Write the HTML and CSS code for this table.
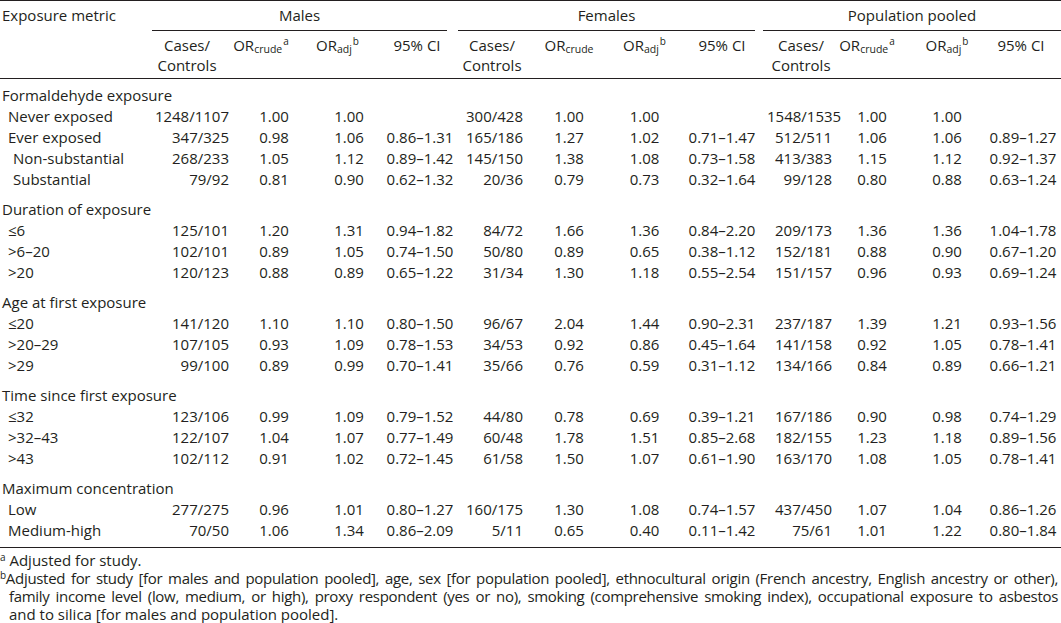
FILE: index.html
```html
<!DOCTYPE html>
<html lang="en">
<head>
<meta charset="utf-8">
<title>Formaldehyde exposure and lung cancer</title>
<link rel="stylesheet" href="styles.css">
</head>
<body>
<div class="page">
<table class="or-table">
<colgroup>
<col class="c-lbl"><col class="c-mcase"><col class="c-mcr"><col class="c-madj"><col class="c-mci">
<col class="c-fcase"><col class="c-fcr"><col class="c-fadj"><col class="c-fci">
<col class="c-pcase"><col class="c-pcr"><col class="c-padj"><col class="c-pci">
</colgroup>
<thead>
<tr class="h1">
<th class="h-lbl">Exposure metric</th>
<th colspan="4" class="h-grp"><div class="grp grp-m">Males</div></th>
<th colspan="4" class="h-grp"><div class="grp grp-f">Females</div></th>
<th colspan="4" class="h-grp"><div class="grp grp-p">Population pooled</div></th>
</tr>
<tr class="h2">
<th></th>
<th class="hc hc-mcase">Cases/<br>Controls</th>
<th class="hc hc-mcr">OR<sub class="sb">crude</sub><sup class="sp">a</sup></th>
<th class="hc hc-madj">OR<sub class="sb">adj</sub><sup class="sp">b</sup></th>
<th class="hc hc-mci">95% CI</th>
<th class="hc">Cases/<br>Controls</th>
<th class="hc">OR<sub class="sb">crude</sub></th>
<th class="hc">OR<sub class="sb">adj</sub><sup class="sp">b</sup></th>
<th class="hc">95% CI</th>
<th class="hc">Cases/<br>Controls</th>
<th class="hc hc-pcr">OR<sub class="sb">crude</sub><sup class="sp">a</sup></th>
<th class="hc">OR<sub class="sb">adj</sub><sup class="sp">b</sup></th>
<th class="hc hc-pci">95% CI</th>
</tr>
</thead>
<tbody>
<tr class="sec sec-first"><td colspan="13">Formaldehyde exposure</td></tr>
<tr><td class="l1">Never exposed</td><td class="cs">1248/1107</td><td>1.00</td><td>1.00</td><td></td><td class="cs">300/428</td><td>1.00</td><td>1.00</td><td></td><td class="cs">1548/1535</td><td>1.00</td><td>1.00</td><td></td></tr>
<tr><td class="l1">Ever exposed</td><td class="cs">347/325</td><td>0.98</td><td>1.06</td><td>0.86–1.31</td><td class="cs">165/186</td><td>1.27</td><td>1.02</td><td>0.71–1.47</td><td class="cs">512/511</td><td>1.06</td><td>1.06</td><td>0.89–1.27</td></tr>
<tr><td class="l2">Non-substantial</td><td class="cs">268/233</td><td>1.05</td><td>1.12</td><td>0.89–1.42</td><td class="cs">145/150</td><td>1.38</td><td>1.08</td><td>0.73–1.58</td><td class="cs">413/383</td><td>1.15</td><td>1.12</td><td>0.92–1.37</td></tr>
<tr><td class="l2">Substantial</td><td class="cs">79/92</td><td>0.81</td><td>0.90</td><td>0.62–1.32</td><td class="cs">20/36</td><td>0.79</td><td>0.73</td><td>0.32–1.64</td><td class="cs">99/128</td><td>0.80</td><td>0.88</td><td>0.63–1.24</td></tr>

<tr class="sec"><td colspan="13">Duration of exposure</td></tr>
<tr><td class="l1">≤6</td><td class="cs">125/101</td><td>1.20</td><td>1.31</td><td>0.94–1.82</td><td class="cs">84/72</td><td>1.66</td><td>1.36</td><td>0.84–2.20</td><td class="cs">209/173</td><td>1.36</td><td>1.36</td><td>1.04–1.78</td></tr>
<tr><td class="l1">&gt;6–20</td><td class="cs">102/101</td><td>0.89</td><td>1.05</td><td>0.74–1.50</td><td class="cs">50/80</td><td>0.89</td><td>0.65</td><td>0.38–1.12</td><td class="cs">152/181</td><td>0.88</td><td>0.90</td><td>0.67–1.20</td></tr>
<tr><td class="l1">&gt;20</td><td class="cs">120/123</td><td>0.88</td><td>0.89</td><td>0.65–1.22</td><td class="cs">31/34</td><td>1.30</td><td>1.18</td><td>0.55–2.54</td><td class="cs">151/157</td><td>0.96</td><td>0.93</td><td>0.69–1.24</td></tr>

<tr class="sec"><td colspan="13">Age at first exposure</td></tr>
<tr><td class="l1">≤20</td><td class="cs">141/120</td><td>1.10</td><td>1.10</td><td>0.80–1.50</td><td class="cs">96/67</td><td>2.04</td><td>1.44</td><td>0.90–2.31</td><td class="cs">237/187</td><td>1.39</td><td>1.21</td><td>0.93–1.56</td></tr>
<tr><td class="l1">&gt;20–29</td><td class="cs">107/105</td><td>0.93</td><td>1.09</td><td>0.78–1.53</td><td class="cs">34/53</td><td>0.92</td><td>0.86</td><td>0.45–1.64</td><td class="cs">141/158</td><td>0.92</td><td>1.05</td><td>0.78–1.41</td></tr>
<tr><td class="l1">&gt;29</td><td class="cs">99/100</td><td>0.89</td><td>0.99</td><td>0.70–1.41</td><td class="cs">35/66</td><td>0.76</td><td>0.59</td><td>0.31–1.12</td><td class="cs">134/166</td><td>0.84</td><td>0.89</td><td>0.66–1.21</td></tr>

<tr class="sec"><td colspan="13">Time since first exposure</td></tr>
<tr><td class="l1">≤32</td><td class="cs">123/106</td><td>0.99</td><td>1.09</td><td>0.79–1.52</td><td class="cs">44/80</td><td>0.78</td><td>0.69</td><td>0.39–1.21</td><td class="cs">167/186</td><td>0.90</td><td>0.98</td><td>0.74–1.29</td></tr>
<tr><td class="l1">&gt;32–43</td><td class="cs">122/107</td><td>1.04</td><td>1.07</td><td>0.77–1.49</td><td class="cs">60/48</td><td>1.78</td><td>1.51</td><td>0.85–2.68</td><td class="cs">182/155</td><td>1.23</td><td>1.18</td><td>0.89–1.56</td></tr>
<tr><td class="l1">&gt;43</td><td class="cs">102/112</td><td>0.91</td><td>1.02</td><td>0.72–1.45</td><td class="cs">61/58</td><td>1.50</td><td>1.07</td><td>0.61–1.90</td><td class="cs">163/170</td><td>1.08</td><td>1.05</td><td>0.78–1.41</td></tr>

<tr class="sec"><td colspan="13">Maximum concentration</td></tr>
<tr><td class="l1">Low</td><td class="cs">277/275</td><td>0.96</td><td>1.01</td><td>0.80–1.27</td><td class="cs">160/175</td><td>1.30</td><td>1.08</td><td>0.74–1.57</td><td class="cs">437/450</td><td>1.07</td><td>1.04</td><td>0.86–1.26</td></tr>
<tr class="last"><td class="l1">Medium-high</td><td class="cs">70/50</td><td>1.06</td><td>1.34</td><td>0.86–2.09</td><td class="cs">5/11</td><td>0.65</td><td>0.40</td><td>0.11–1.42</td><td class="cs">75/61</td><td>1.01</td><td>1.22</td><td>0.80–1.84</td></tr>
</tbody>
</table>

<div class="notes">
<p class="note"><sup class="fn">a</sup> Adjusted for study.</p>
<p class="note note-b">
<span class="ln ln-j"><sup class="fn">b</sup>Adjusted for study [for males and population pooled], age, sex [for population pooled], ethnocultural origin (French ancestry, English ancestry or other),</span>
<span class="ln ln-j ind">family income level (low, medium, or high), proxy respondent (yes or no), smoking (comprehensive smoking index), occupational exposure to asbestos</span>
<span class="ln ind">and to silica [for males and population pooled].</span>
</p>
</div>
</div>
</body>
</html>
```

FILE: styles.css
```css
html, body {
  margin: 0;
  padding: 0;
  background: #ffffff;
}

body {
  font-family: "Open Sans", "Noto Sans", sans-serif;
  font-size: 15px;
  color: #231f20;
}

.page {
  width: 1061px;
}

.or-table {
  width: 1061px;
  table-layout: fixed;
  border-collapse: separate;
  border-spacing: 0;
}

.c-lbl { width: 150px; }
.c-mcase { width: 82px; }
.c-mcr { width: 84px; }
.c-madj { width: 66px; }
.c-mci { width: 76px; }
.c-fcase { width: 68px; }
.c-fcr { width: 86px; }
.c-fadj { width: 65px; }
.c-fci { width: 90px; }
.c-pcase { width: 68px; }
.c-pcr { width: 74px; }
.c-padj { width: 76px; }
.c-pci { width: 76px; }

th, td {
  padding: 0;
  font-weight: normal;
  white-space: nowrap;
}

/* header row 1 */
.h1 th {
  border-top: 1px solid #231f20;
  padding-top: 4px;
  line-height: 20px;
  vertical-align: top;
}

.h-lbl {
  text-align: left;
  padding-left: 2px;
}

.h-grp {
  text-align: center;
}

.grp {
  border-bottom: 1px solid #231f20;
  padding-bottom: 5px;
}

.grp-m { margin-left: 2px; margin-right: 11px; }
.grp-f { margin-left: 0; margin-right: 12px; }
.grp-p { margin-left: -4px; margin-right: 0; }

/* header row 2 */
.h2 th {
  border-bottom: 1px solid #231f20;
  padding-top: 4px;
  padding-bottom: 3px;
  line-height: 20px;
  vertical-align: top;
  text-align: center;
}

.hc-mcase { padding-right: 8px; }
.hc-mcr { padding-right: 26px; }
.hc-madj { padding-right: 28px; }
.hc-mci { padding-right: 6px; }
.hc-pcr { padding-right: 10px; }
.hc-pci { padding-right: 4px; }

.sb {
  font-size: 10.5px;
  vertical-align: -2px;
  line-height: 0;
}

.sp {
  font-size: 10px;
  vertical-align: 6px;
  line-height: 0;
  margin-left: 1px;
}

/* body */
tbody td {
  line-height: 21px;
  text-align: center;
  vertical-align: top;
}

tbody td.cs {
  text-align: right;
  padding-right: 3px;
}

tbody td.l1 {
  text-align: left;
  padding-left: 8px;
}

tbody td.l2 {
  text-align: left;
  padding-left: 13px;
}

.sec td {
  text-align: left;
  padding-left: 2px;
  padding-top: 8px;
  line-height: 22px;
}

.sec-first td {
  padding-top: 5px;
}

.last td {
  padding-bottom: 6px;
  border-bottom: 1px solid #231f20;
}

/* footnotes */
.notes {
  width: 1058px;
  margin-top: 3px;
}

.note {
  margin: 0;
  line-height: 18px;
}

.fn {
  font-size: 10px;
  vertical-align: 5px;
  line-height: 0;
}

.ln {
  display: block;
  white-space: nowrap;
}

.ln-j {
  text-align: justify;
  text-align-last: justify;
  letter-spacing: -0.3px;
  word-spacing: -2.5px;
}

.ind {
  padding-left: 9px;
}
```
